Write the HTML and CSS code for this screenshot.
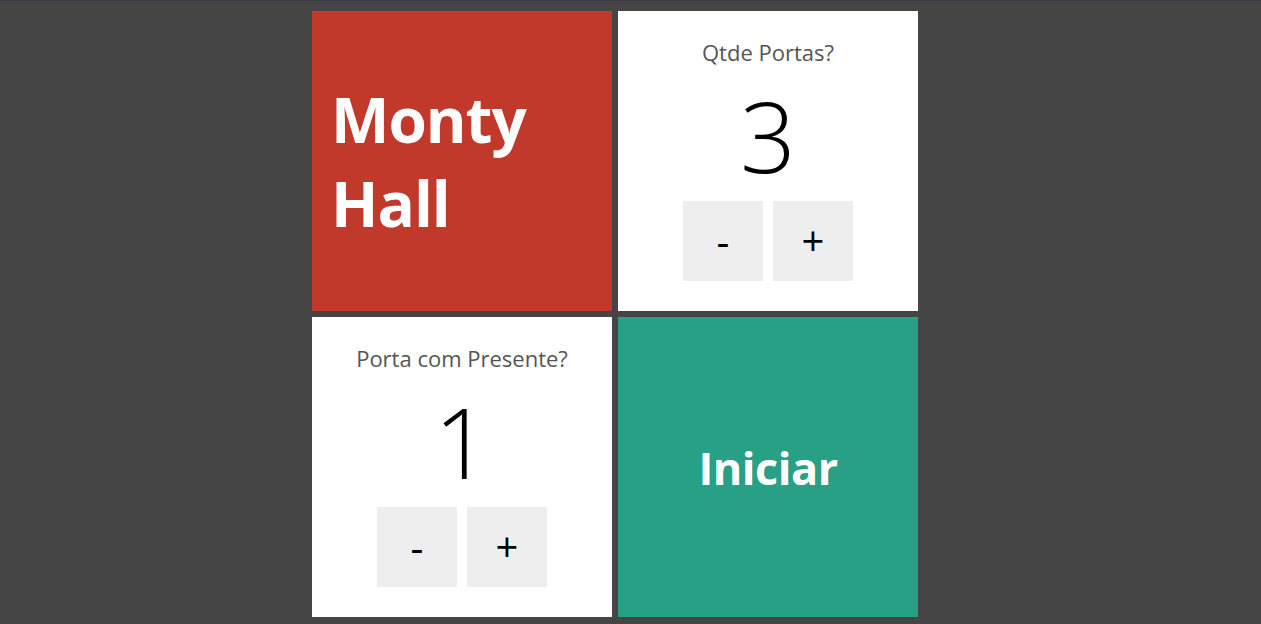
FILE: index.html
```html
<!DOCTYPE html>
<html lang="pt">
<head>
<meta charset="utf-8">
<title>Monty Hall</title>
<link rel="stylesheet" href="styles.css">
</head>
<body>
<div class="topline"></div>
<main class="board">
  <section class="card card-title">
    <h1 class="title">Monty<br>Hall</h1>
  </section>
  <section class="card card-input">
    <div class="label">Qtde Portas?</div>
    <div class="value">3</div>
    <div class="buttons">
      <button class="btn">-</button>
      <button class="btn">+</button>
    </div>
  </section>
  <section class="card card-input">
    <div class="label">Porta com Presente?</div>
    <div class="value">1</div>
    <div class="buttons">
      <button class="btn">-</button>
      <button class="btn">+</button>
    </div>
  </section>
  <section class="card card-start">
    <span class="start">Iniciar</span>
  </section>
</main>
</body>
</html>
```

FILE: styles.css
```css
html, body {
  margin: 0;
  padding: 0;
}
body {
  background: #454545;
  font-family: "Open Sans", "Noto Sans", sans-serif;
  height: 624px;
  overflow: hidden;
}
.topline {
  height: 1px;
  background: #3a3a48;
}
.board {
  display: grid;
  grid-template-columns: 300px 300px;
  grid-template-rows: 300px 300px;
  gap: 6px;
  margin: 10px 0 0 312px;
  width: 606px;
}
.card {
  display: flex;
  box-sizing: border-box;
}
.card-title {
  background: #c0392b;
  align-items: center;
  padding-left: 19px;
}
.title {
  margin: 0;
  color: #fff;
  font-weight: 700;
  font-size: 62px;
  line-height: 84px;
  letter-spacing: -1px;
}
.card-input {
  background: #fff;
  flex-direction: column;
  align-items: center;
}
.label {
  margin-top: 26px;
  color: #555;
  font-size: 22px;
  line-height: 30px;
}
.value {
  margin-top: 13px;
  font-size: 98px;
  font-weight: 300;
  line-height: 110px;
  color: #000;
  height: 121px;
}
.buttons {
  display: flex;
  gap: 10px;
}
.btn {
  width: 80px;
  height: 80px;
  border: none;
  background: #eee;
  font-family: "Open Sans", "Noto Sans", sans-serif;
  font-size: 40px;
  line-height: 80px;
  color: #000;
  padding: 0;
}
.card-start {
  background: #27a085;
  align-items: center;
  justify-content: center;
}
.start {
  color: #fff;
  font-weight: 700;
  font-size: 45px;
  letter-spacing: -0.5px;
}
```
